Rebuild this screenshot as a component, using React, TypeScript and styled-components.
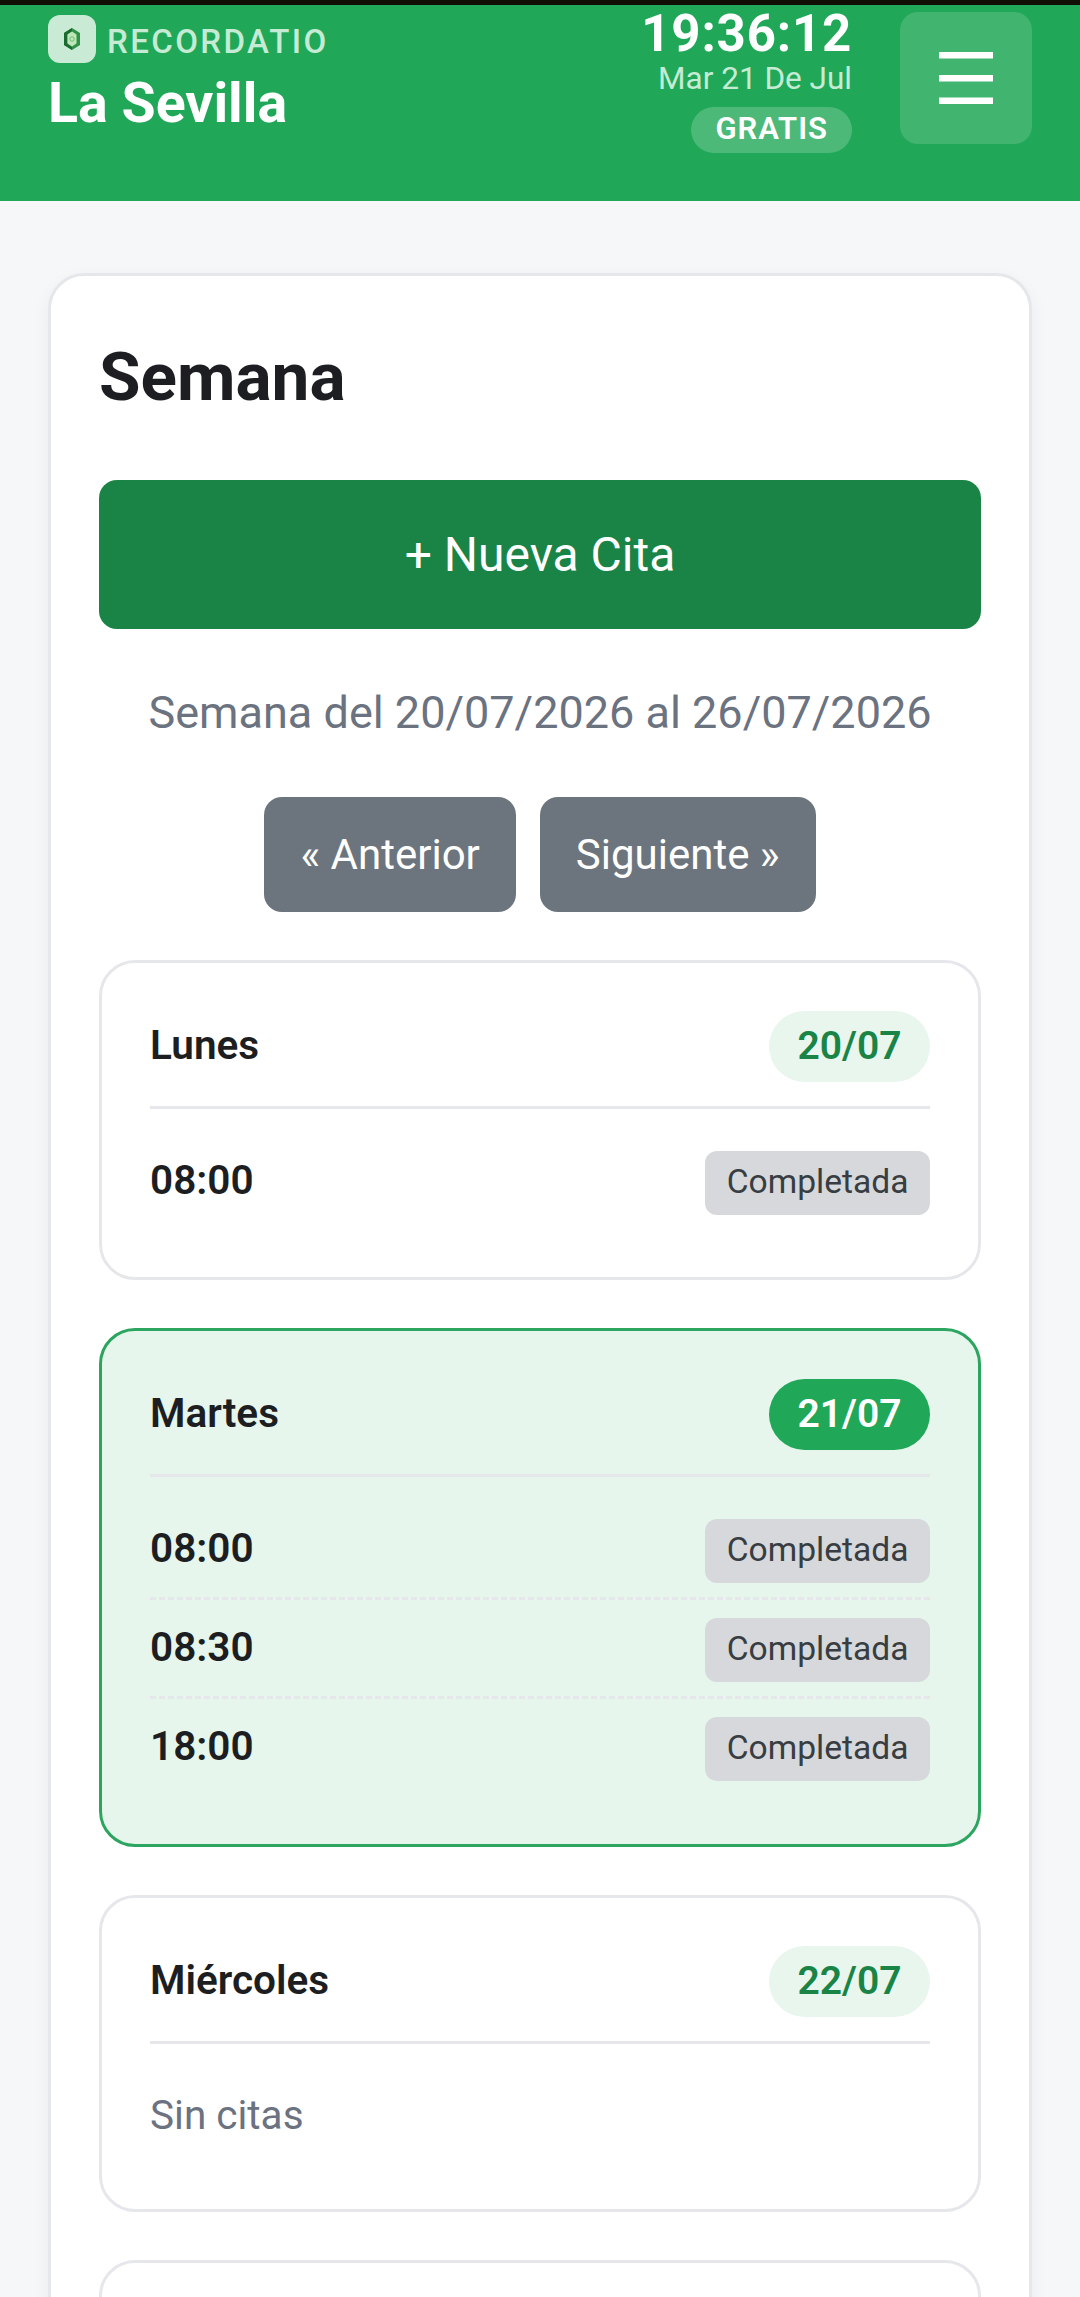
import React from 'react';
import styled, { createGlobalStyle } from 'styled-components';

const GlobalStyle = createGlobalStyle`
    html, body {
        margin: 0;
        padding: 0;
        background: #f5f7f9;
        font-family: Roboto, "Liberation Sans", sans-serif;
        height: 100%;
        overflow: hidden;
    }
    * {
        box-sizing: border-box;
    }
`;

const Page = styled.div`
    display: flex;
    flex-direction: column;
    height: 2297px;
    overflow: hidden;
`;
const StatusStrip = styled.div`
    height: 5px;
    flex: none;
    background: #0f0d04;
`;
const Header = styled.header`
    display: flex;
    flex: none;
    justify-content: space-between;
    align-items: flex-start;
    height: 196px;
    padding: 7px 48px 0;
    background: #20a858;
    color: #fff;
`;
const Brand = styled.div`
    display: flex;
    flex-direction: column;
    padding-top: 3px;
`;
const BrandRow = styled.div`
    display: flex;
    align-items: center;
    gap: 11px;
`;
const LogoBox = styled.div`
    display: flex;
    align-items: center;
    justify-content: center;
    width: 48px;
    height: 48px;
    border-radius: 12px;
    background: #c9ebd6;
`;
const BrandName = styled.span`
    padding-top: 5px;
    font-size: 33px;
    font-weight: 500;
    letter-spacing: 2.4px;
    color: #c6ebd5;
    line-height: 43px;
`;
const ShopName = styled.div`
    font-size: 55.5px;
    font-weight: 700;
    line-height: 66px;
    margin-top: 8px;
`;
const HeaderRight = styled.div`
    display: flex;
    align-items: flex-start;
    gap: 48px;
`;
const Clock = styled.div`
    display: flex;
    flex-direction: column;
    align-items: flex-end;
`;
const Time = styled.div`
    font-size: 51px;
    font-weight: 700;
    letter-spacing: 0.8px;
    line-height: 44px;
`;
const DateText = styled.div`
    font-size: 31.5px;
    font-weight: 400;
    color: #c6ebd5;
    line-height: 36px;
    margin-top: 5px;
`;
const PlanPill = styled.div`
    height: 46px;
    padding: 0 24px;
    margin-top: 10px;
    border-radius: 24px;
    font-size: 31px;
    font-weight: 600;
    letter-spacing: 1px;
    line-height: 44px;
    background: rgba(255, 255, 255, 0.2);
`;
const MenuButton = styled.button`
    display: flex;
    align-items: center;
    justify-content: center;
    width: 132px;
    height: 132px;
    border: 0;
    border-radius: 18px;
    padding: 0;
    background: rgba(255, 255, 255, 0.15);
    color: #fff;
`;
const Main = styled.main`
    padding: 72px 48px 0;
`;
const Card = styled.section`
    padding: 48px;
    background: #fff;
    border: 3px solid #e5e7eb;
    border-radius: 36px;
    box-shadow: 0 6px 18px rgba(0, 0, 0, 0.05);
`;
const Title = styled.h1`
    margin: 0;
    font-size: 67.5px;
    font-weight: 700;
    line-height: 105px;
    color: #1c1e21;
`;
const NewButton = styled.button`
    display: block;
    width: 100%;
    height: 149px;
    margin-top: 51px;
    border: 0;
    border-radius: 18px;
    background: #1a8447;
    color: #fff;
    font-family: inherit;
    font-size: 48px;
    font-weight: 400;
`;
const WeekRange = styled.div`
    margin-top: 48px;
    text-align: center;
    font-size: 45px;
    line-height: 72px;
    color: #6b7280;
`;
const NavRow = styled.div`
    display: flex;
    justify-content: center;
    gap: 24px;
    margin-top: 48px;
`;
const NavButton = styled.button`
    height: 115px;
    padding: 0 36px;
    border: 0;
    border-radius: 18px;
    background: #6c757d;
    color: #fff;
    font-family: inherit;
    font-size: 42px;
`;
const DayList = styled.div`
    display: flex;
    flex-direction: column;
    gap: 48px;
    margin-top: 48px;
`;
const DayCard = styled.article<{ $today?: boolean }>`
    padding: 48px 48px ${p => (p.$today ? '49px' : '48px')};
    border: 3px solid ${p => (p.$today ? '#2ba55f' : '#e5e7eb')};
    border-radius: 36px;
    background: ${p => (p.$today ? '#e6f6ed' : '#fff')};
`;
const DayHeader = styled.div`
    display: flex;
    justify-content: space-between;
    align-items: center;
    padding-bottom: 24px;
    margin-bottom: 24px;
    border-bottom: 3px solid #e5e7eb;
`;
const DayName = styled.span`
    padding-bottom: 3px;
    font-size: 40.5px;
    font-weight: 600;
    color: #1c1e21;
`;
const DateBadge = styled.span<{ $today?: boolean }>`
    height: 71px;
    padding: 0 28.5px;
    border-radius: 36px;
    font-size: 39px;
    font-weight: 600;
    line-height: 71px;
    background: ${p => (p.$today ? '#20a858' : '#e8f6ee')};
    color: ${p => (p.$today ? '#fff' : '#1a8447')};
`;
const SlotRow = styled.div`
    display: flex;
    justify-content: space-between;
    align-items: flex-start;
    padding: 18px 0 14px;
    border-bottom: 3px dashed #e5e7eb;
    &:last-child {
        border-bottom: 0;
    }
`;
const SlotTime = styled.span`
    font-size: 40.5px;
    font-weight: 600;
    line-height: 58px;
    color: #1c1e21;
`;
const StatusBadge = styled.span`
    height: 64px;
    padding: 0 21.5px;
    border-radius: 12px;
    font-size: 33.6px;
    line-height: 62px;
    background: #d6d8db;
    color: #383d41;
`;
const EmptyText = styled.div`
    padding: 25px 0 23px;
    font-size: 40.5px;
    line-height: 45px;
    color: #6b7280;
`;

const Logo = () => (
    <svg width="16" height="22" viewBox="0 0 16 22">
        <path d="M8 0 L16 5 V17 L8 22 L0 17 V5 Z" fill="#2f9146" />
        <path d="M8 0 L0 5 V17 L8 22 L8 19 L3 15.5 V6.5 L8 3 Z" fill="#1b6a32" />
        <path d="M8 3.5 L12.5 6.5 V15.5 L8 18.5 L3.5 15.5 V6.5 Z" fill="#bfe6b8" />
        <circle cx="8" cy="11" r="2.2" fill="none" stroke="#6fbf7a" strokeWidth="1" />
    </svg>
);

const MenuIcon = () => (
    <svg width="54" height="52" viewBox="0 0 54 52">
        <rect x="0" y="0" width="54" height="6.5" fill="#fff" />
        <rect x="0" y="23" width="54" height="6.5" fill="#fff" />
        <rect x="0" y="45.5" width="54" height="6.5" fill="#fff" />
    </svg>
);

const days = [
    { name: 'Lunes', date: '20/07', slots: ['08:00'] },
    { name: 'Martes', date: '21/07', today: true, slots: ['08:00', '08:30', '18:00'] },
    { name: 'Miércoles', date: '22/07', slots: [] as string[] },
    { name: 'Jueves', date: '23/07', slots: [] as string[] },
];

export default function App() {
    return (<>
        <GlobalStyle />
        <Page>
            <StatusStrip />
            <Header>
                <Brand>
                    <BrandRow>
                        <LogoBox><Logo /></LogoBox>
                        <BrandName>RECORDATIO</BrandName>
                    </BrandRow>
                    <ShopName>La Sevilla</ShopName>
                </Brand>
                <HeaderRight>
                    <Clock>
                        <Time>19:36:12</Time>
                        <DateText>Mar 21 De Jul</DateText>
                        <PlanPill>GRATIS</PlanPill>
                    </Clock>
                    <MenuButton aria-label="Menú"><MenuIcon /></MenuButton>
                </HeaderRight>
            </Header>
            <Main>
                <Card>
                    <Title>Semana</Title>
                    <NewButton>+ Nueva Cita</NewButton>
                    <WeekRange>Semana del 20/07/2026 al 26/07/2026</WeekRange>
                    <NavRow>
                        <NavButton>« Anterior</NavButton>
                        <NavButton>Siguiente »</NavButton>
                    </NavRow>
                    <DayList>
                        { days.map(day => (<DayCard key={ day.name } $today={ day.today }>
                            <DayHeader>
                                <DayName>{ day.name }</DayName>
                                <DateBadge $today={ day.today }>{ day.date }</DateBadge>
                            </DayHeader>
                            { day.slots.length === 0 && <EmptyText>Sin citas</EmptyText> }
                            { day.slots.map(slot => (<SlotRow key={ slot }>
                                <SlotTime>{ slot }</SlotTime>
                                <StatusBadge>Completada</StatusBadge>
                            </SlotRow>)) }
                        </DayCard>)) }
                    </DayList>
                </Card>
            </Main>
        </Page>
    </>);
}
